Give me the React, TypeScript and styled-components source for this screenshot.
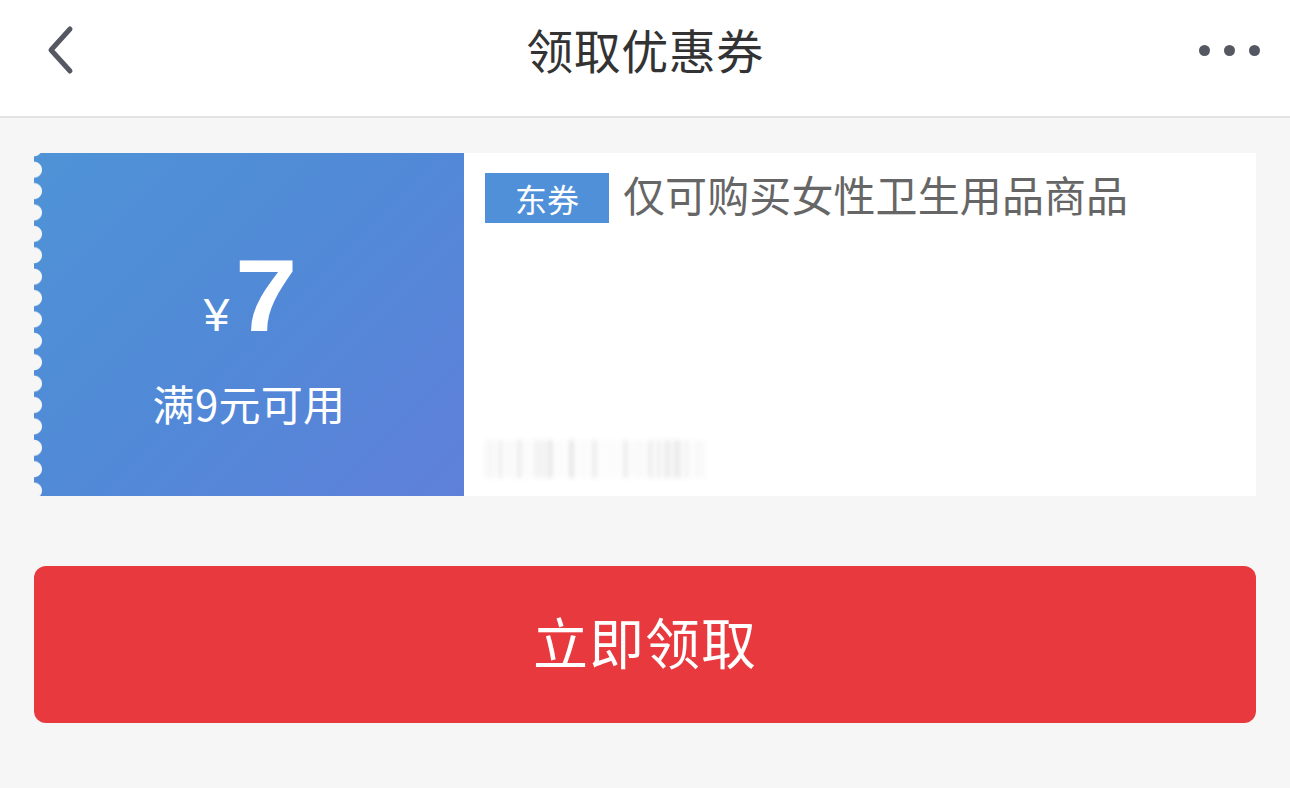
import React from "react";
import styled, { createGlobalStyle } from "styled-components";

const Global = createGlobalStyle`
  html, body {
    margin: 0;
    padding: 0;
    background: #f6f6f6;
    font-family: "Noto Sans CJK SC", "Noto Sans", sans-serif;
  }
  #root { min-height: 788px; }
`;

const Page = styled.div`
  width: 1290px;
  height: 788px;
  background: #f6f6f6;
  display: flex;
  flex-direction: column;
  overflow: hidden;
`;

const NavBar = styled.header`
  height: 116px;
  background: #fff;
  border-bottom: 2px solid #e3e3e3;
  display: grid;
  grid-template-columns: 200px 1fr 200px;
  align-items: center;
  flex-shrink: 0;
`;

const BackButton = styled.div`
  padding-left: 44px;
  display: flex;
  align-items: center;
  padding-bottom: 14px;
`;

const Title = styled.h1`
  margin: 0;
  text-align: center;
  font-size: 47px;
  font-weight: 400;
  color: #333;
  letter-spacing: 0.5px;
  padding-bottom: 20px;
`;

const MoreButton = styled.div`
  display: flex;
  justify-content: flex-end;
  gap: 14px;
  padding-right: 30px;
  padding-bottom: 16px;
`;

const Dot = styled.span`
  width: 11px;
  height: 11px;
  border-radius: 50%;
  background: #555862;
`;

const Content = styled.main`
  padding: 35px 34px 0;
  display: flex;
  flex-direction: column;
  gap: 70px;
`;

const Coupon = styled.section`
  height: 343px;
  display: flex;
  background: #fff;
`;

const Stub = styled.div`
  position: relative;
  width: 430px;
  flex-shrink: 0;
  background: linear-gradient(135deg, #4f93d6 0%, #5189d7 50%, #5f80d9 100%);
  display: flex;
  flex-direction: column;
  align-items: center;
  justify-content: center;
  color: #fff;
  padding-top: 28px;
  box-sizing: border-box;

  &::before {
    content: "";
    position: absolute;
    left: 0;
    top: 0;
    bottom: 0;
    width: 10px;
    background: radial-gradient(circle at 0 50%, #f6f6f6 7.5px, transparent 8.5px) 0 6px / 10px 21.4px repeat-y;
  }
`;

const Amount = styled.div`
  display: flex;
  align-items: baseline;
  margin-left: -2px;
`;

const Currency = styled.span`
  font-family: "Liberation Sans", Arial, sans-serif;
  font-size: 46px;
  margin-right: 6px;
`;

const Value = styled.span`
  display: inline-block;
  font-family: "Liberation Sans", Arial, sans-serif;
  font-weight: 700;
  font-size: 102px;
  line-height: 1;
  transform: scaleX(1.1);
  transform-origin: left center;
`;

const Condition = styled.div`
  font-size: 42px;
  margin-top: 25px;
  letter-spacing: 0.3px;
`;

const Details = styled.div`
  flex: 1;
  padding: 18px 20px 18px 21px;
  display: flex;
  flex-direction: column;
  justify-content: space-between;
`;

const HeadLine = styled.div`
  display: flex;
  align-items: center;
  gap: 14px;
`;

const Tag = styled.span`
  width: 124px;
  height: 50px;
  background: #4f90d8;
  color: #fff;
  font-size: 32px;
  display: flex;
  align-items: center;
  justify-content: center;
`;

const Scope = styled.span`
  font-size: 42px;
  color: #666;
  letter-spacing: 0.1px;
  margin-top: -8px;
`;

const Validity = styled.div`
  display: flex;
  align-items: stretch;
  height: 38px;
  width: 222px;
  gap: 4px;
  filter: blur(2.5px);
  opacity: 0.75;
`;

const Stroke = styled.span<{ $w: number; $a: number }>`
  width: ${(p) => p.$w}px;
  background: rgba(120, 120, 120, ${(p) => p.$a});
`;

const ClaimButton = styled.button`
  height: 157px;
  border: none;
  border-radius: 12px;
  background: #e83a3e;
  color: #fff;
  font-family: "Noto Sans CJK SC", "Noto Sans", sans-serif;
  font-size: 55px;
  letter-spacing: 1px;
  padding: 0 0 10px;
  cursor: pointer;
`;

const strokes: [number, number][] = [
  [10, 0.08], [3, 0.25], [8, 0.06], [3, 0.3], [6, 0.05], [3, 0.25], [2, 0.35],
  [4, 0.3], [10, 0.04], [3, 0.4], [12, 0.04], [3, 0.3], [20, 0.03], [3, 0.3],
  [14, 0.05], [3, 0.3], [6, 0.15], [3, 0.35], [8, 0.2], [4, 0.15], [12, 0.06],
];

export default function App() {
  return (
    <Page>
      <Global />
      <NavBar>
        <BackButton>
          <svg width="34" height="52" viewBox="0 0 34 52">
            <path
              d="M26 4 L7 25 L26 46"
              fill="none"
              stroke="#555862"
              strokeWidth="5"
              strokeLinecap="round"
              strokeLinejoin="round"
            />
          </svg>
        </BackButton>
        <Title>领取优惠券</Title>
        <MoreButton>
          <Dot />
          <Dot />
          <Dot />
        </MoreButton>
      </NavBar>
      <Content>
        <Coupon>
          <Stub>
            <Amount>
              <Currency>¥</Currency>
              <Value>7</Value>
            </Amount>
            <Condition>满9元可用</Condition>
          </Stub>
          <Details>
            <HeadLine>
              <Tag>东券</Tag>
              <Scope>仅可购买女性卫生用品商品</Scope>
            </HeadLine>
            <Validity>
              {strokes.map(([w, a], i) => (
                <Stroke key={i} $w={w} $a={a} />
              ))}
            </Validity>
          </Details>
        </Coupon>
        <ClaimButton>立即领取</ClaimButton>
      </Content>
    </Page>
  );
}
